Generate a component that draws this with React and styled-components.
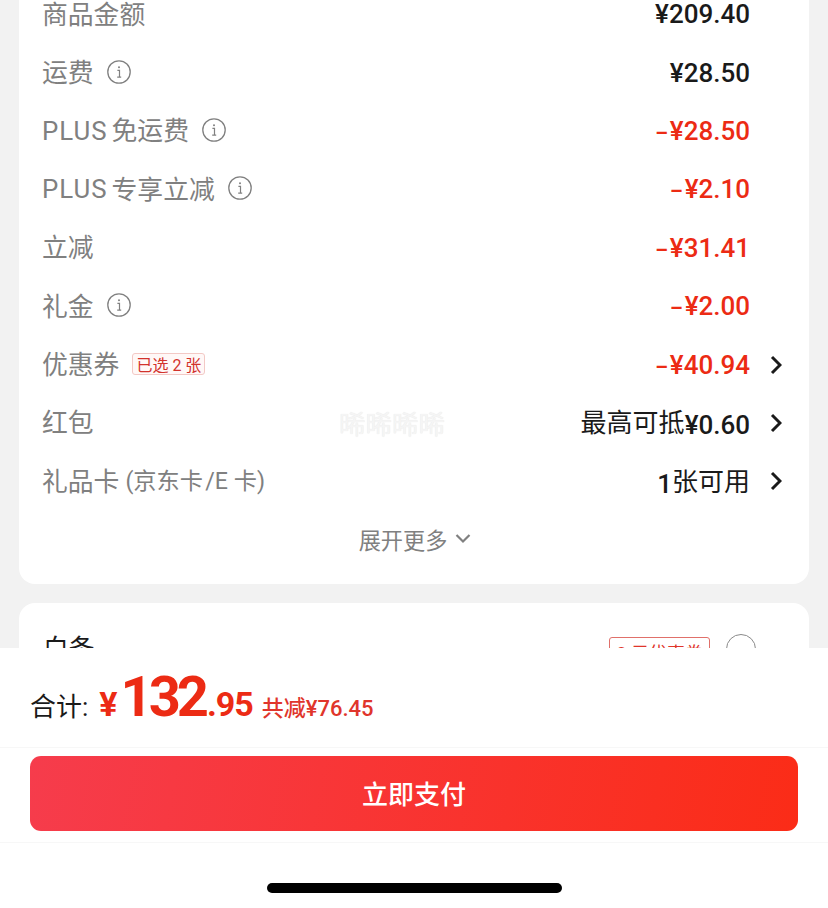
import React from 'react'
import styled, { createGlobalStyle } from 'styled-components'

const GlobalStyle = createGlobalStyle`
    html, body {
        margin: 0;
        padding: 0;
        background: #f2f2f2;
        font-family: Roboto, "Noto Sans CJK SC", sans-serif;
    }
`

const InfoIcon = () => (
    <InfoSvg viewBox="0 0 24 24">
        <circle cx="12" cy="12" r="11.2" fill="none" stroke="#808080" strokeWidth="1.3" />
        <circle cx="12" cy="7.3" r="1" fill="#808080" />
        <path d="M10.4 10.4h2.1v6.6M10.2 17.2h4" fill="none" stroke="#808080" strokeWidth="1.2" />
    </InfoSvg>
)

const Chevron = () => (
    <ChevronSvg viewBox="0 0 12 20">
        <path d="M2 2l8 8-8 8" fill="none" stroke="#1a1a1a" strokeWidth="3" />
    </ChevronSvg>
)

const rows = [
    { id: 'goods', label: '商品金额', value: '¥209.40' },
    { id: 'freight', label: '运费', info: true, value: '¥28.50' },
    { id: 'plusFreight', latin: 'PLUS', label: '免运费', info: true, minus: true, value: '¥28.50' },
    { id: 'plusCut', latin: 'PLUS', label: '专享立减', info: true, minus: true, value: '¥2.10' },
    { id: 'cut', label: '立减', minus: true, value: '¥31.41' },
    { id: 'gift', label: '礼金', info: true, minus: true, value: '¥2.00' },
    { id: 'coupon', label: '优惠券', tag: '已选 2 张', minus: true, value: '¥40.94', arrow: true },
    { id: 'redPacket', label: '红包', plain: '最高可抵', value: '¥0.60', arrow: true },
    { id: 'card', label: '礼品卡', note: '(京东卡\u200A/E 卡)', value: '1', plain: '张可用', plainLast: true, arrow: true },
]

const App = () => {
    return (
        <Page>
            <GlobalStyle />
            <Content>
                <PriceCard>
                    {rows.map((row) => (
                        <Row key={row.id}>
                            <Label>
                                {row.latin && <Latin>{row.latin}</Latin>}
                                {row.label}
                                {row.note && <Note>{row.note}</Note>}
                                {row.info && <InfoIcon />}
                                {row.tag && <Tag>{row.tag}</Tag>}
                            </Label>
                            <Value $red={row.minus}>
                                {row.minus && <Minus>–</Minus>}
                                {row.plain && !row.plainLast && <Plain>{row.plain}</Plain>}
                                {row.value}
                                {row.plainLast && <Plain>{row.plain}</Plain>}
                            </Value>
                            <ArrowSlot>{row.arrow && <Chevron />}</ArrowSlot>
                        </Row>
                    ))}
                    <More>
                        展开更多
                        <svg width="16" height="11" viewBox="0 0 16 11">
                            <path d="M1.5 2l6.5 6.5L14.5 2" fill="none" stroke="#808080" strokeWidth="2.2" />
                        </svg>
                    </More>
                    <Watermark>晞晞晞晞</Watermark>
                </PriceCard>
                <PayCard>
                    <PayName>白条</PayName>
                    <PayTag>2 元优惠券</PayTag>
                    <Radio />
                </PayCard>
            </Content>
            <Footer>
                <TotalBar>
                    <TotalLabel>合计:</TotalLabel>
                    <Yen>¥</Yen>
                    <BigPrice>132</BigPrice>
                    <Cents>.95</Cents>
                    <Saved>共减¥76.45</Saved>
                </TotalBar>
                <ButtonBar>
                    <PayButton>立即支付</PayButton>
                </ButtonBar>
                <HomeArea>
                    <HomeBar />
                </HomeArea>
            </Footer>
        </Page>
    )
}

export default App

const Page = styled.div`
    height: 908px;
    display: flex;
    flex-direction: column;
    overflow: hidden;
    background: #f2f2f2;
`

const Content = styled.div`
    height: 648px;
    flex-shrink: 0;
    overflow: hidden;
    padding: 0 19px;
    box-sizing: border-box;
`

const PriceCard = styled.div`
    position: relative;
    margin-top: -15px;
    padding: 0 27px 15px 23px;
    height: 599px;
    box-sizing: border-box;
    background: #fff;
    border-radius: 0 0 16px 16px;
`

const Row = styled.div`
    height: 58.4px;
    display: grid;
    grid-template-columns: 1fr auto 32px;
    align-items: center;
`

const Label = styled.div`
    display: flex;
    align-items: center;
    padding-bottom: 4px;
    font-size: 25.8px;
    color: #808080;
    white-space: pre;
`

const Latin = styled.span`
    letter-spacing: 1px;
    margin-right: 4px;
    transform: translateY(2px);
`

const Note = styled.span`
    margin-left: 6px;
    font-size: 23.2px;
`

const InfoSvg = styled.svg`
    width: 24px;
    height: 24px;
    margin: 2px 0 0 13px;
`

const Tag = styled.span`
    margin: 2px 0 0 13px;
    height: 20px;
    padding: 0 3px;
    display: flex;
    align-items: center;
    font-size: 16px;
    color: #d2322c;
    background: #fff8f7;
    border: 1px solid #f3c9c5;
    border-radius: 3px;
`

const Value = styled.div`
    font-size: 26px;
    font-weight: 500;
    color: ${(props) => (props.$red ? '#ec2b14' : '#1a1a1a')};
`

const Minus = styled.span`
    font-size: 20px;
    font-weight: 700;
    margin-right: 2px;
`

const Plain = styled.span`
    display: inline-block;
    font-weight: 400;
    transform: translateY(-2px);
`

const ArrowSlot = styled.div`
    display: flex;
    justify-content: flex-end;
    align-items: center;
`

const ChevronSvg = styled.svg`
    width: 12px;
    height: 20px;
`

const More = styled.div`
    height: 58.4px;
    display: flex;
    align-items: center;
    justify-content: center;
    gap: 8px;
    padding: 0 0 2px 6px;
    box-sizing: border-box;
    font-size: 22.2px;
    color: #808080;
`

const Watermark = styled.div`
    position: absolute;
    left: 320px;
    top: 418px;
    font-size: 26.5px;
    color: #f5f5f5;
    text-shadow: 0 0 1px #e4e4e4;
`

const PayCard = styled.div`
    margin-top: 19px;
    height: 100px;
    padding: 26px 53px 0 24px;
    display: flex;
    align-items: flex-start;
    box-sizing: border-box;
    background: #fff;
    border-radius: 16px 16px 0 0;
`

const PayName = styled.div`
    flex: 1;
    font-size: 25.8px;
    line-height: 40px;
    color: #1a1a1a;
`

const PayTag = styled.div`
    margin-top: 8px;
    height: 28px;
    padding: 0 6px;
    display: flex;
    align-items: center;
    font-size: 18px;
    color: #e0352b;
    border: 1px solid #e0706a;
    border-radius: 3px;
`

const Radio = styled.div`
    margin: 5px 0 0 16px;
    width: 30px;
    height: 30px;
    box-sizing: border-box;
    border: 1.5px solid #8a8a8a;
    border-radius: 50%;
`

const Footer = styled.div`
    flex: 1;
    display: flex;
    flex-direction: column;
    background: #fff;
`

const TotalBar = styled.div`
    height: 100px;
    padding: 0 30px;
    display: flex;
    align-items: baseline;
    box-sizing: border-box;
    border-bottom: 1px solid #f7f7f7;
    line-height: 98px;
    color: #ec2b14;
    font-weight: 700;
`

const TotalLabel = styled.span`
    font-size: 26px;
    font-weight: 400;
    color: #1a1a1a;
    margin-right: 11px;
`

const Yen = styled.span`
    font-size: 34px;
    margin-right: 3px;
`

const BigPrice = styled.span`
    font-size: 56px;
    letter-spacing: -4px;
`

const Cents = styled.span`
    font-size: 34px;
    letter-spacing: -1px;
    margin: 0 9px 0 2px;
`

const Saved = styled.span`
    font-size: 22px;
    font-weight: 500;
    color: #e0352b;
`

const ButtonBar = styled.div`
    height: 95px;
    padding: 8px 30px 0;
    box-sizing: border-box;
    border-bottom: 1px solid #f7f7f7;
`

const PayButton = styled.div`
    height: 75px;
    padding-bottom: 2px;
    box-sizing: border-box;
    display: flex;
    align-items: center;
    justify-content: center;
    font-size: 26px;
    font-weight: 500;
    color: #fff;
    background: linear-gradient(100deg, #f63c4c 0%, #fb2c17 100%);
    border-radius: 11px;
`

const HomeArea = styled.div`
    flex: 1;
    display: flex;
    justify-content: center;
    padding-top: 40px;
`

const HomeBar = styled.div`
    width: 295px;
    height: 10px;
    background: #000;
    border-radius: 5px;
`
